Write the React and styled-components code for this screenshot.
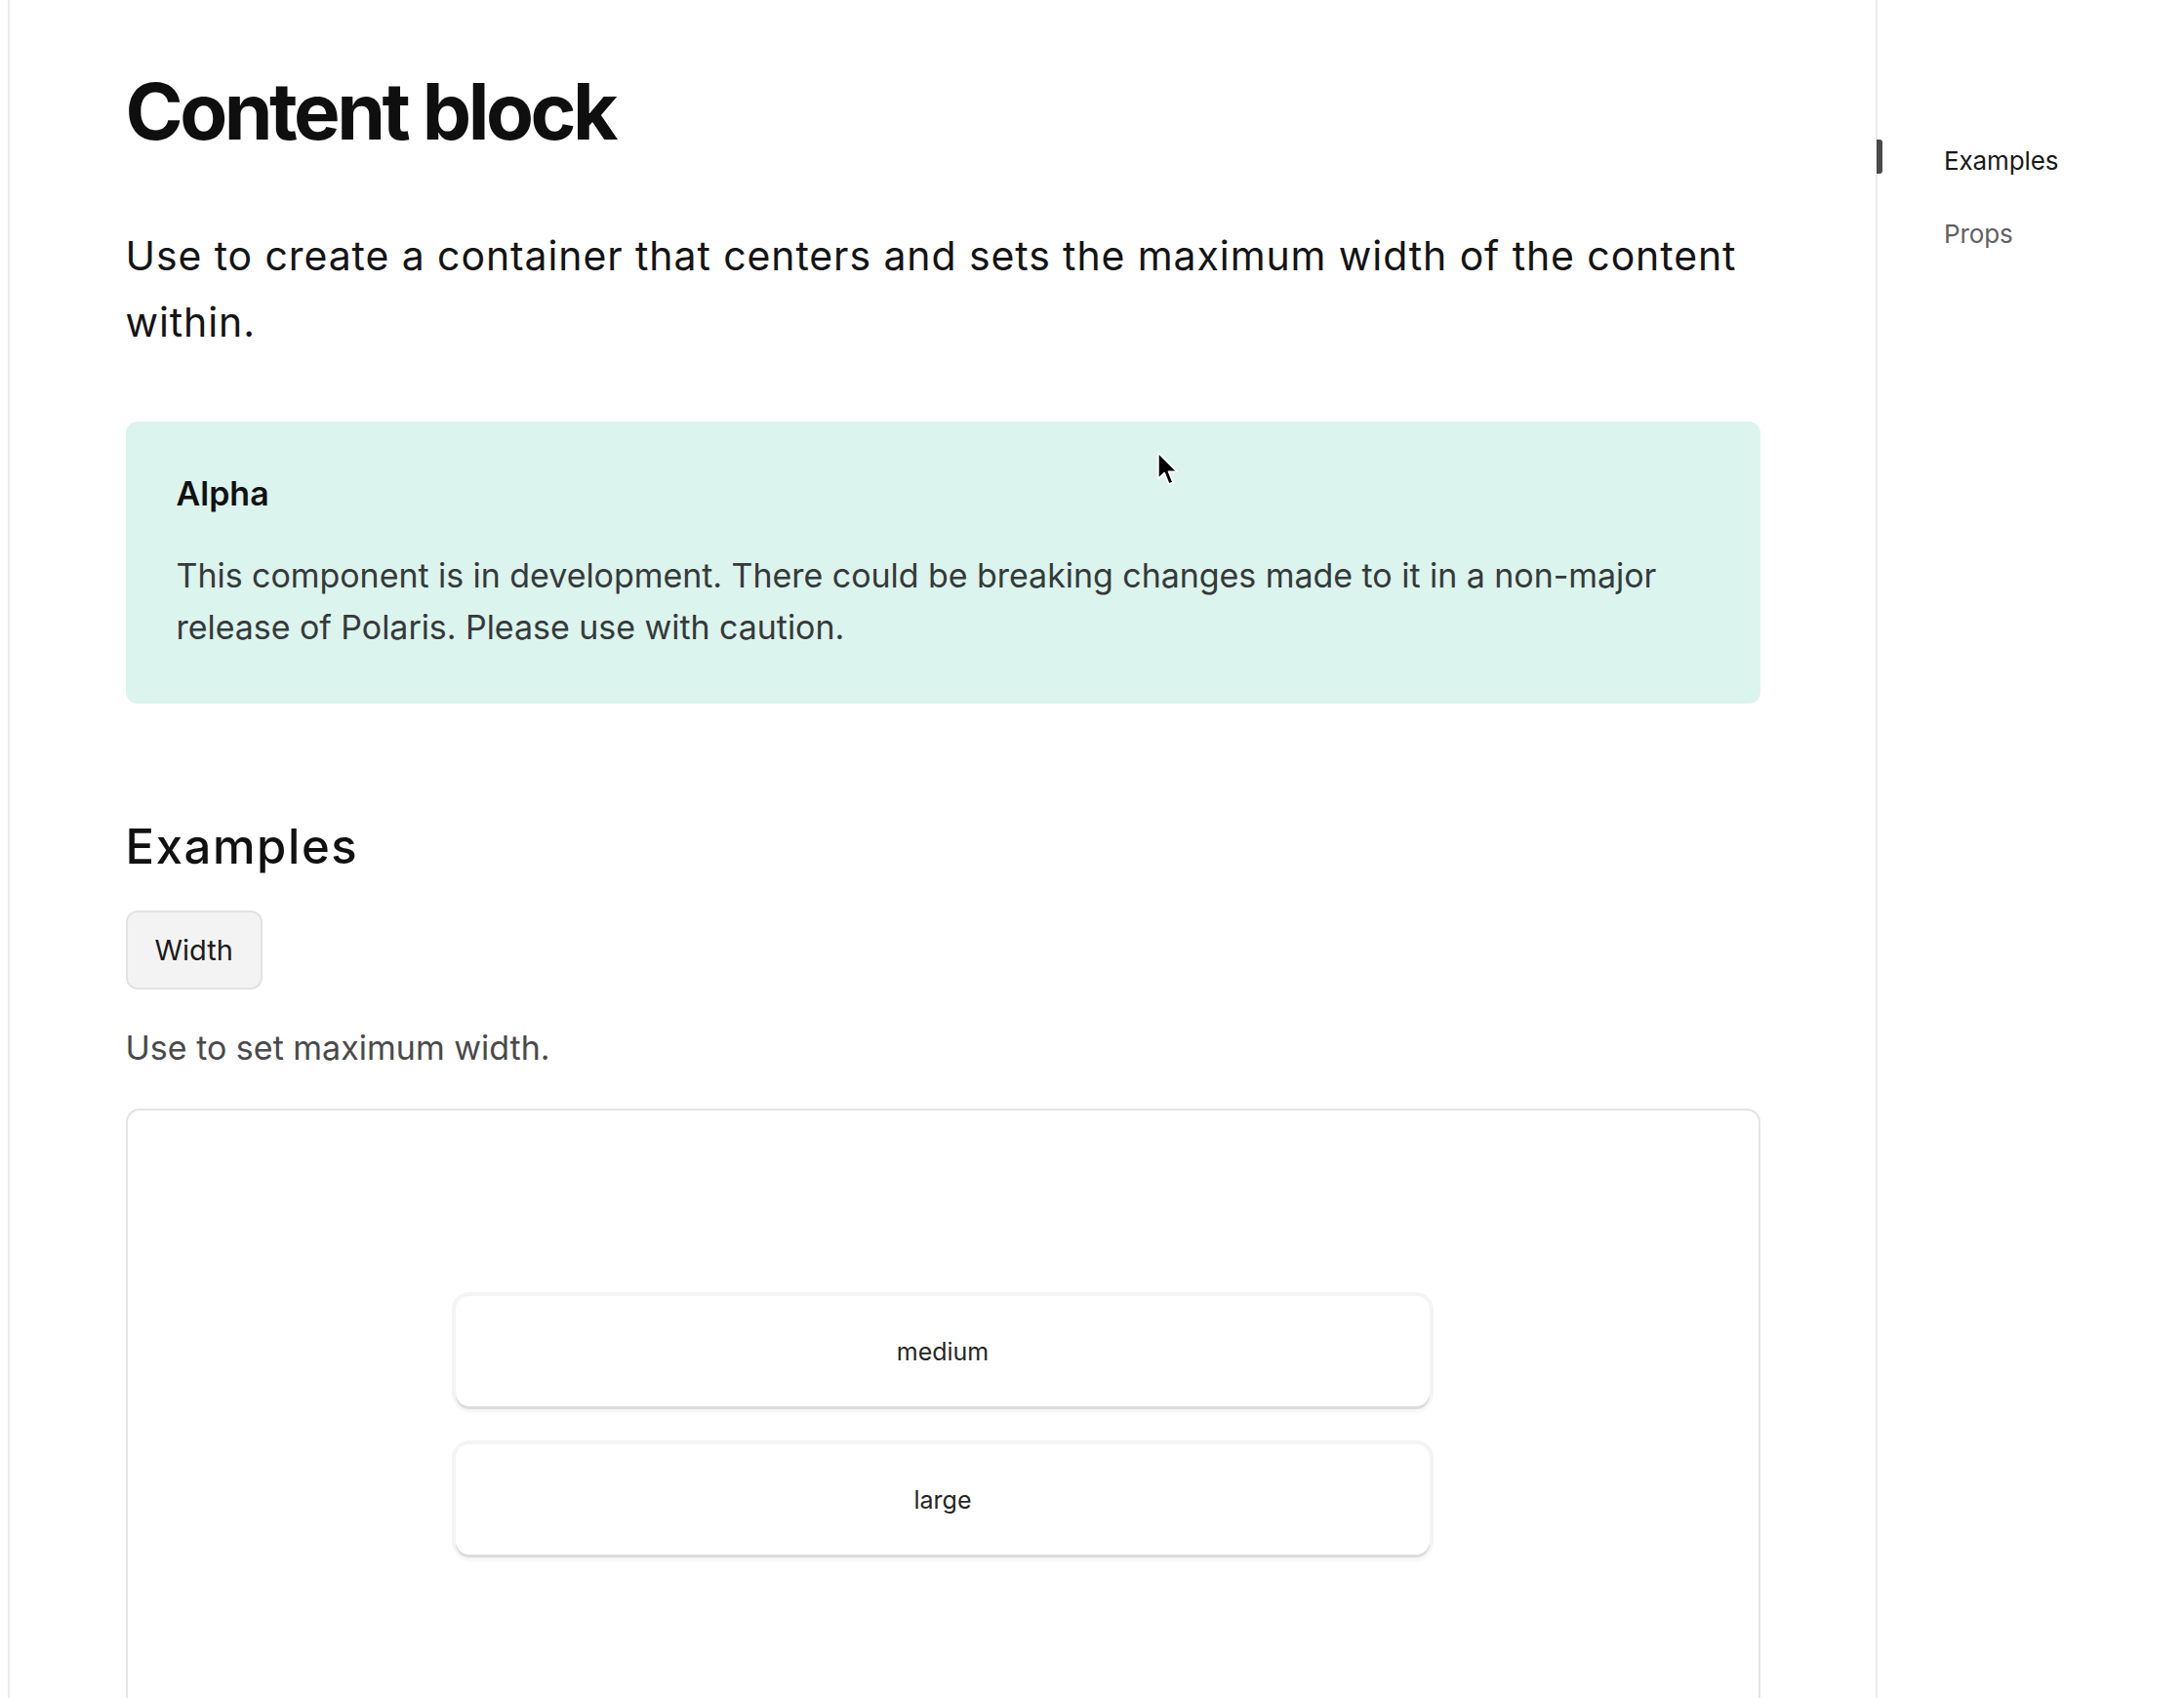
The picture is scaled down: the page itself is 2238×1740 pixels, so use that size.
import React from "react";
import styled, { createGlobalStyle } from "styled-components";

const GlobalStyle = createGlobalStyle`
  html, body {
    margin: 0;
    padding: 0;
    background: #ffffff;
  }
  body {
    font-family: Inter, "Noto Sans", "Liberation Sans", sans-serif;
    color: #1a1a1a;
    -webkit-font-smoothing: antialiased;
  }
  * { box-sizing: border-box; }
`;

const Page = styled.div`
  position: relative;
  display: flex;
  min-height: 1740px;
  width: 2238px;
`;

const LeftRail = styled.div`
  flex: 0 0 10px;
  border-right: 2px solid #ebebeb;
`;

const Main = styled.main`
  flex: 1 1 auto;
  padding-top: 66px;
`;

const Content = styled.div`
  width: 1675px;
  margin: 0 auto;
  display: flex;
  flex-direction: column;
  align-items: stretch;
`;

const Title = styled.h1`
  margin: 0;
  font-size: 80px;
  line-height: 96px;
  font-weight: 650;
  letter-spacing: -3.5px;
  color: #0f0f0f;
`;

const Lead = styled.p`
  margin: 66px 0 0;
  font-size: 41px;
  line-height: 68px;
  font-weight: 400;
  letter-spacing: 0.9px;
  color: #141414;
`;

const Notice = styled.section`
  margin-top: 68px;
  padding: 48px 52px 52px;
  border-radius: 12px;
  background: #dcf4ee;
`;

const NoticeTitle = styled.h3`
  margin: 0;
  font-size: 34px;
  line-height: 51px;
  font-weight: 600;
  color: #111111;
`;

const NoticeText = styled.p`
  margin: 32px 0 0;
  font-size: 34px;
  line-height: 53px;
  letter-spacing: -0.05px;
  color: #353a39;
`;

const SectionTitle = styled.h2`
  margin: 118px 0 0;
  font-size: 49px;
  line-height: 58px;
  font-weight: 450;
  letter-spacing: 1.6px;
  color: #111111;
`;

const TabRow = styled.div`
  margin-top: 36px;
  display: flex;
  gap: 16px;
`;

const TabButton = styled.button`
  font-family: inherit;
  font-size: 29px;
  line-height: 37px;
  padding: 20px 28px;
  border: 2px solid #e3e3e3;
  border-radius: 12px;
  background: ${(p) => (p.$active ? "#f3f3f3" : "transparent")};
  color: #1a1a1a;
  cursor: pointer;
`;

const Description = styled.p`
  margin: 33px 0 0;
  font-size: 34px;
  line-height: 53px;
  color: #4a4a4a;
`;

const Frame = styled.div`
  margin-top: 36px;
  height: 650px;
  border: 2px solid #e4e4e4;
  border-radius: 14px;
  padding-top: 190px;
  display: flex;
  flex-direction: column;
  align-items: center;
  gap: 39px;
`;

const SizeCard = styled.div`
  width: 998px;
  height: 113px;
  display: flex;
  align-items: center;
  justify-content: center;
  background: #ffffff;
  border-radius: 14px;
  box-shadow: 0 3px 0 0 #dcdcdc, 0 0 0 4px #f4f4f4, 0 6px 4px rgba(0, 0, 0, 0.05);
  font-size: 25px;
  color: #262626;
`;

const Aside = styled.aside`
  flex: 0 0 316px;
  border-left: 2px solid #ebebeb;
  padding-top: 145px;
`;

const NavList = styled.nav`
  display: flex;
  flex-direction: column;
  gap: 35px;
`;

const NavItem = styled.a`
  position: relative;
  display: block;
  padding-left: 68px;
  font-size: 26px;
  line-height: 40px;
  letter-spacing: -0.1px;
  color: ${(p) => (p.$active ? "#1a1a1a" : "#616161")};
  text-decoration: none;

  &::before {
    content: "";
    display: ${(p) => (p.$active ? "block" : "none")};
    position: absolute;
    left: -1px;
    top: -2px;
    width: 6px;
    height: 35px;
    border-radius: 0 3px 3px 0;
    background: #4a4a4a;
  }
`;

const Cursor = styled.svg`
  position: absolute;
  left: 1185px;
  top: 462px;
  width: 24px;
  height: 37px;
  pointer-events: none;
`;

export default function App() {
  return (
    <>
      <GlobalStyle />
      <Page>
        <LeftRail />
        <Main>
          <Content>
            <Title>Content block</Title>
            <Lead>
              Use to create a container that centers and sets the maximum width of the content
              within.
            </Lead>
            <Notice>
              <NoticeTitle>Alpha</NoticeTitle>
              <NoticeText>
                This component is in development. There could be breaking changes made to it in a
                non-major release of Polaris. Please use with caution.
              </NoticeText>
            </Notice>
            <SectionTitle>Examples</SectionTitle>
            <TabRow>
              <TabButton $active>Width</TabButton>
            </TabRow>
            <Description>Use to set maximum width.</Description>
            <Frame>
              <SizeCard>medium</SizeCard>
              <SizeCard>large</SizeCard>
            </Frame>
          </Content>
        </Main>
        <Aside>
          <NavList>
            <NavItem $active href="#examples">Examples</NavItem>
            <NavItem href="#props">Props</NavItem>
          </NavList>
        </Aside>
        <Cursor viewBox="0 0 20 31">
          <path
            d="M1.5 1.5 L1.5 24 L6.8 19 L10.6 28.5 L14.2 27 L10.4 17.8 L17.5 17.8 Z"
            fill="#000"
            stroke="#fff"
            strokeWidth="1.4"
            strokeLinejoin="round"
          />
        </Cursor>
      </Page>
    </>
  );
}
